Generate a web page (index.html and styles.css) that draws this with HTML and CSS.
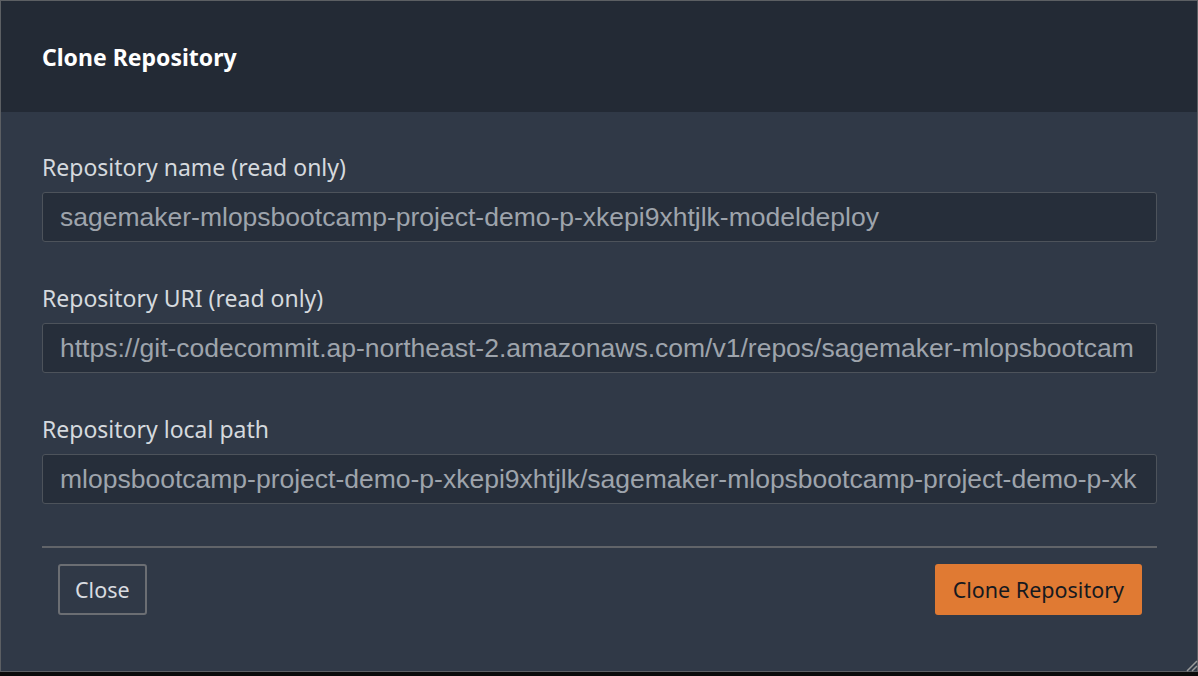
FILE: index.html
```html
<!DOCTYPE html>
<html>
<head>
<meta charset="utf-8">
<link rel="stylesheet" href="styles.css">
</head>
<body>
<div class="dialog">
  <div class="header"><h1 class="title">Clone Repository</h1></div>
  <div class="body">
    <div class="field">
      <div class="label">Repository name (read only)</div>
      <div class="input">sagemaker-mlopsbootcamp-project-demo-p-xkepi9xhtjlk-modeldeploy</div>
    </div>
    <div class="field">
      <div class="label">Repository URI (read only)</div>
      <div class="input">https://git-codecommit.ap-northeast-2.amazonaws.com/v1/repos/sagemaker-mlopsbootcam</div>
    </div>
    <div class="field">
      <div class="label">Repository local path</div>
      <div class="input">mlopsbootcamp-project-demo-p-xkepi9xhtjlk/sagemaker-mlopsbootcamp-project-demo-p-xk</div>
    </div>
    <div class="divider"></div>
    <div class="actions">
      <button class="btn btn-secondary">Close</button>
      <button class="btn btn-primary">Clone Repository</button>
    </div>
  </div>
  <svg class="grip" width="14" height="14" viewBox="0 0 14 14"><path d="M13 3 L3 13 M13 8 L8 13" stroke="#9a9a9a" stroke-width="1.5"/></svg>
</div>
</body>
</html>
```
FILE: styles.css
```css
html, body {
  margin: 0;
  padding: 0;
  background: #0b0b0b;
  width: 1198px;
  height: 676px;
  overflow: hidden;
}
.dialog {
  position: relative;
  width: 1196px;
  height: 670px;
  border: 1px solid #5c5f63;
  display: flex;
  flex-direction: column;
  font-family: "Noto Sans", "Open Sans", sans-serif;
}
.header {
  background: #232a35;
  height: 111px;
  display: flex;
  align-items: center;
  padding-left: 41px;
  flex: none;
}
.title {
  margin: 0;
  color: #ffffff;
  font-size: 23px;
  font-weight: 700;
}
.body {
  flex: 1;
  background: #303947;
  padding: 41px 40px 0 41px;
}
.field {
  display: flex;
  flex-direction: column;
  margin-bottom: 42px;
}
.label {
  color: #d5d9de;
  font-size: 23px;
  line-height: 28px;
  margin-bottom: 11px;
}
.input {
  height: 48px;
  border: 1px solid #4d535b;
  border-radius: 3px;
  background: #262e3a;
  color: #9ea4ac;
  font-family: "Liberation Sans", Arial, sans-serif;
  font-size: 26.5px;
  line-height: 48px;
  padding: 0 17px;
  white-space: nowrap;
  overflow: hidden;
}
.divider {
  height: 2px;
  background: #616469;
}
.actions {
  display: flex;
  justify-content: space-between;
  padding: 16px 15px 0 16px;
}
.btn {
  font-family: "Noto Sans", "Open Sans", sans-serif;
  font-size: 21.5px;
  height: 51px;
  border-radius: 3px;
  cursor: pointer;
}
.btn-secondary {
  background: transparent;
  border: 2px solid #6b6e73;
  color: #d9dce0;
  padding: 0 15px;
}
.btn-primary {
  background: #e07a33;
  border: none;
  color: #16191f;
  padding: 0 18px;
}
.grip {
  position: absolute;
  right: -1px;
  bottom: -1px;
}
```
